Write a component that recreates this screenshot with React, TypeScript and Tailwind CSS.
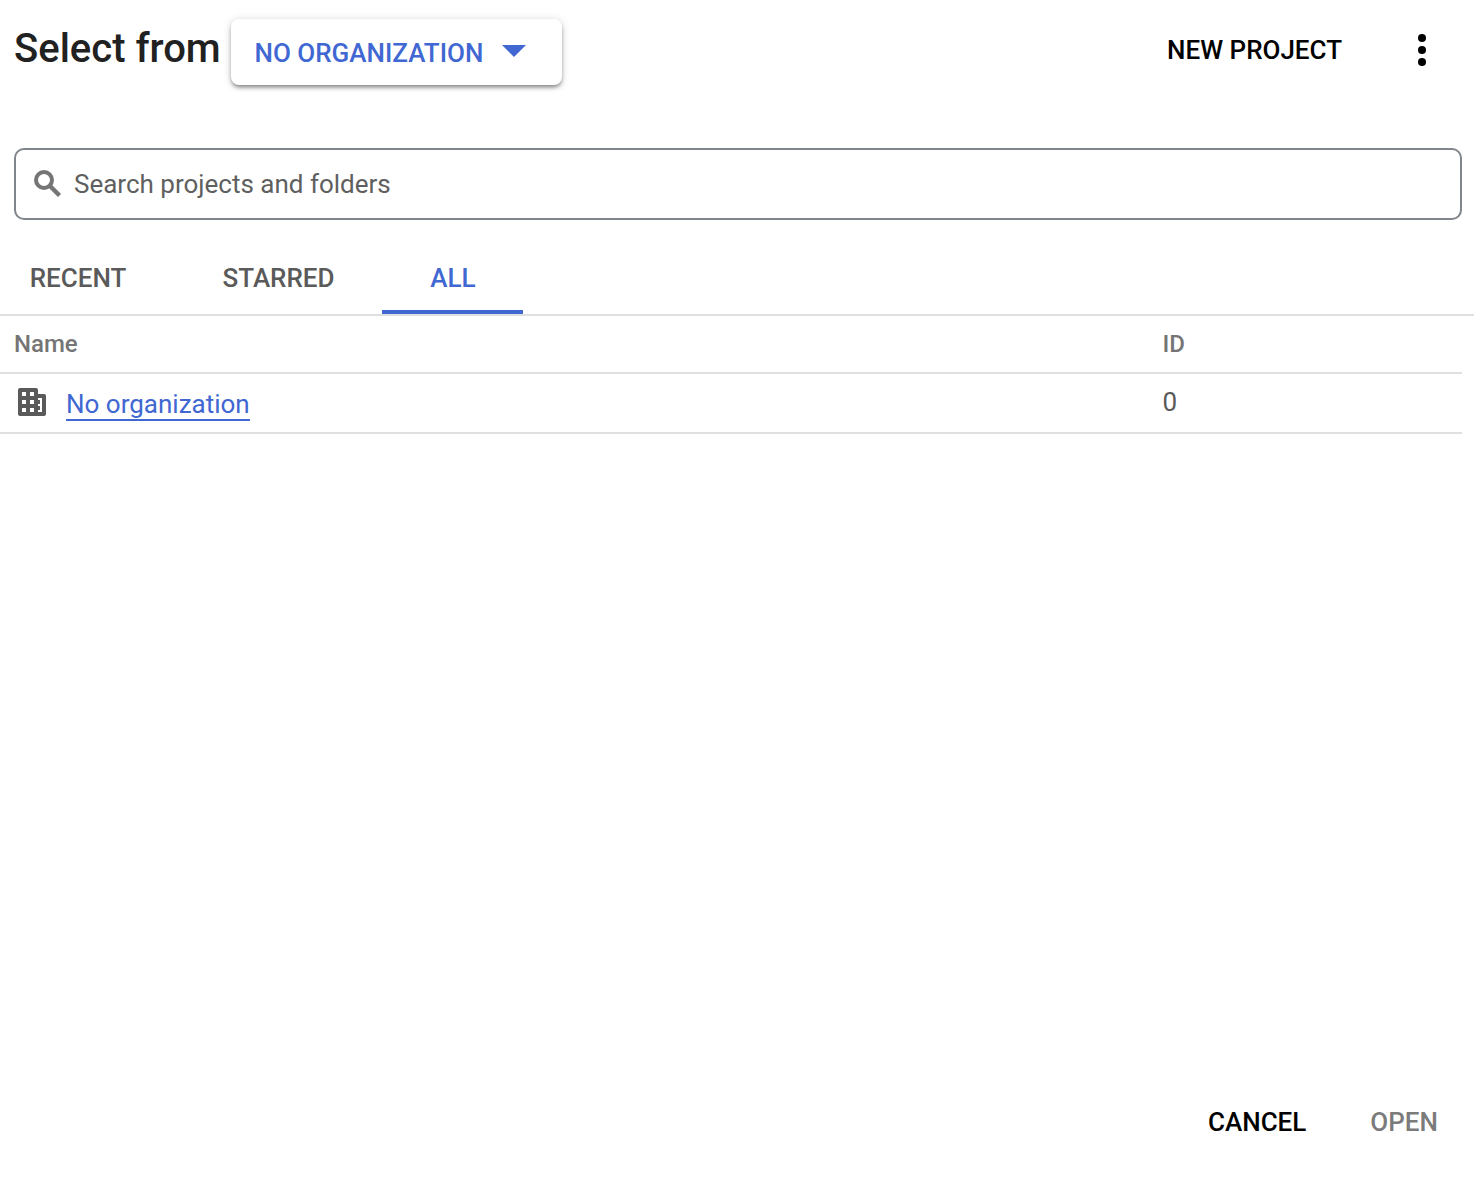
export default function App() {
  return (
    <div className="flex h-[1184px] w-[1474px] flex-col overflow-hidden bg-white font-['Roboto',sans-serif] text-[26px] leading-8 font-medium text-black">
      <header className="flex h-[148px] items-start pl-[14px]">
        <h1 className="mt-[25px] w-[206px] text-[40px] leading-[48px] whitespace-nowrap text-[#212121]">Select from</h1>
        <button className="mt-[19px] ml-[11px] flex h-[66px] w-[331px] items-center rounded-[8px] bg-white pl-[23.5px] text-[#4067d2] shadow-[0_3px_4px_-1px_rgba(0,0,0,0.45),0_1px_8px_rgba(0,0,0,0.16)]">
          <span className="mt-[2px]">NO ORGANIZATION</span>
          <svg className="mb-[2px] ml-[19px] h-3 w-6" viewBox="0 0 24 12" fill="currentColor"><path d="M0 0H24L12 12Z" /></svg>
        </button>
        <div className="mt-[34px] mr-12 ml-auto flex">
          <button>NEW PROJECT</button>
          <svg className="ml-[76px] h-8 w-2" viewBox="0 0 8 32"><circle cx="4" cy="4" r="4" /><circle cx="4" cy="16" r="4" /><circle cx="4" cy="28" r="4" /></svg>
        </div>
      </header>
      <div className="mr-3 ml-[14px] flex h-[72px] items-center rounded-[10px] border-2 border-[#80868b] pl-[18px] font-normal text-[#5f5f5f]">
        <svg className="h-7 w-7 text-[#757575]" viewBox="0 0 28 28" fill="none" stroke="currentColor" strokeWidth="4"><circle cx="10" cy="10" r="8" /><path d="M15 15L25.5 25.5" strokeWidth="4.4" /></svg>
        <span className="ml-3">Search projects and folders</span>
      </div>
      <nav className="mt-[22px] flex h-[74px] border-b-2 border-[#e0e0e0] text-[#5a5a5a]">
        <button className="h-[72px] w-[156px]">RECENT</button>
        <button className="ml-[18px] h-[72px] w-[208px] pl-px">STARRED</button>
        <button className="h-[72px] w-[141px] border-b-4 border-[#4067d2] pt-1 pl-px text-[#4067d2]">ALL</button>
      </nav>
      <div className="mr-3 flex h-[58px] items-center border-b-2 border-[#e0e0e0] pl-[14px] text-[24px] text-[#757575]">
        <span className="w-[1148.5px]">Name</span><span>ID</span>
      </div>
      <div className="mr-3 flex h-[60px] items-start border-b-2 border-[#e0e0e0] pl-[18px] font-normal text-[#5a5a5a]">
        <svg className="mt-[14px] h-7 w-7" viewBox="0 0 28 28" fill="currentColor"><path fillRule="evenodd" d="M2 0H18Q20 0 20 2V6H26Q28 6 28 8V26Q28 28 26 28H2Q0 28 0 26V2Q0 0 2 0ZM4 4V8H8V4ZM12 4V8H16V4ZM4 12V16H8V12ZM12 12V16H16V12ZM4 20V24H8V20ZM12 20V24H16V20ZM20 10V12H22V16H20V18H22V22H20V24H24V10Z" /></svg>
        <a className="mt-[14px] ml-5 h-[33px] w-[184px] border-b-2 border-[#4067d2] leading-8 whitespace-nowrap text-[#4067d2]">No organization</a>
        <span className="mt-3 ml-[912.5px]">0</span>
      </div>
      <footer className="mt-auto mr-9 mb-[46px] flex justify-end gap-16">
        <button>CANCEL</button><button className="text-[#7b7b7b]">OPEN</button>
      </footer>
    </div>
  );
}
